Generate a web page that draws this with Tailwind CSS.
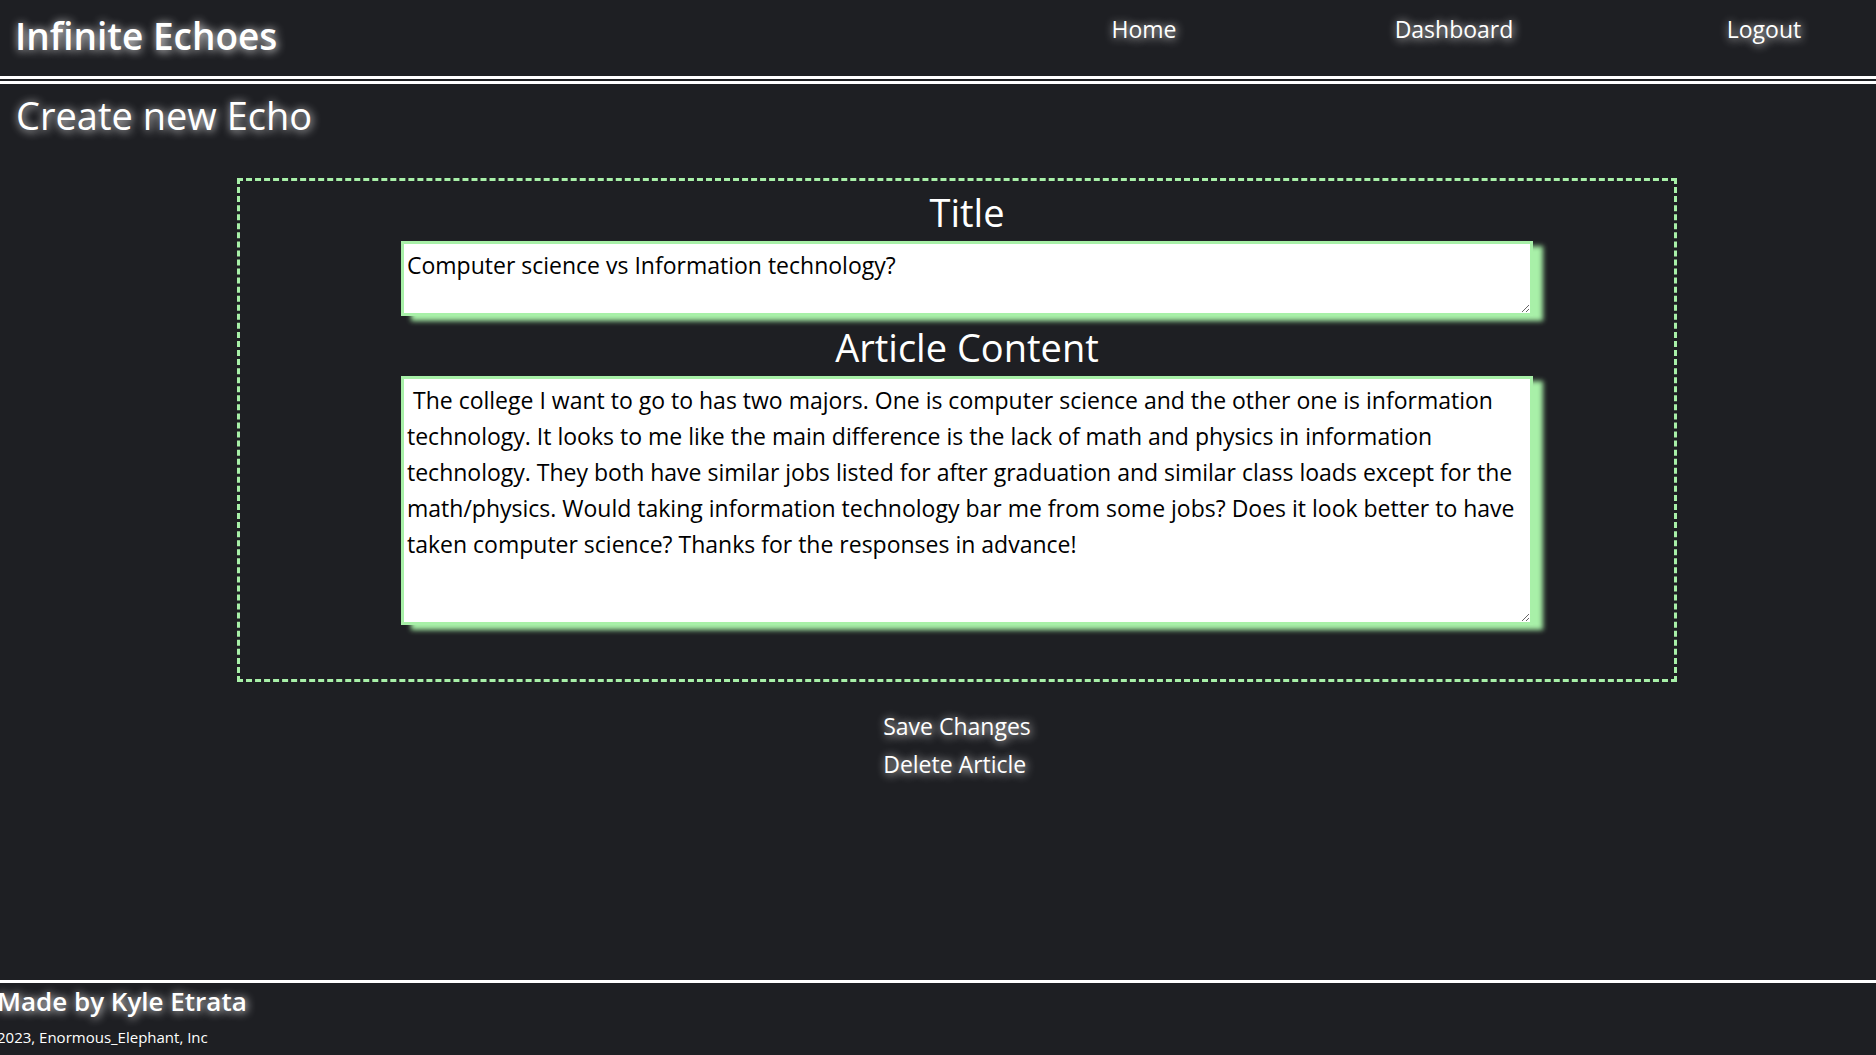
<!DOCTYPE html>
<html lang="en">
<head>
<meta charset="utf-8">
<title>Infinite Echoes</title>
<script src="https://cdn.jsdelivr.net/npm/@tailwindcss/browser@4"></script>
</head>
<body class="flex min-h-screen flex-col overflow-x-hidden bg-[#1e1f23] text-white font-['Segoe_UI','Open_Sans',sans-serif]">
  <header class="flex h-[84px] items-start justify-between border-b-8 border-double border-white pl-[15px]">
    <h1 class="mt-2 text-[37px] leading-14 font-semibold text-shadow-[1px_1px_10px_white]">Infinite Echoes</h1>
    <nav class="mt-[11px] mr-[52px] flex gap-[190px] text-[23px] leading-9 text-shadow-[1px_1px_10px_white]">
      <a href="#" class="w-[120px] text-center">Home</a>
      <a href="#" class="w-[120px] text-center">Dashboard</a>
      <a href="#" class="w-[120px] text-center">Logout</a>
    </nav>
  </header>
  <main class="flex-1">
    <h2 class="mt-[3px] pl-4 text-[38px] leading-14 text-shadow-[1px_1px_10px_white]">Create new Echo</h2>
    <form class="mt-[35px]">
      <div class="mr-[199px] ml-[237px] flex h-[504px] flex-col border-3 border-dashed border-[#a8f0a8] pt-[3px] pr-[141px] pl-[161px]">
        <label for="title" class="mb-px text-center text-[38px] leading-14">Title</label>
        <textarea id="title" class="h-[75px] resize border-3 border-[#a8f0a8] bg-white px-[3px] py-[3px] text-[23px] leading-9 text-black shadow-[10px_5px_5px_#a8f0a8]">Computer science vs Information technology?</textarea>
        <label for="content" class="mt-[3px] mb-px text-center text-[38px] leading-14">Article Content</label>
        <textarea id="content" class="h-[249px] resize border-3 border-[#a8f0a8] bg-white px-[3px] py-[3px] text-[23px] leading-9 text-black shadow-[10px_5px_5px_#a8f0a8]"> The college I want to go to has two majors. One is computer science and the other one is information technology. It looks to me like the main difference is the lack of math and physics in information technology. They both have similar jobs listed for after graduation and similar class loads except for the math/physics. Would taking information technology bar me from some jobs? Does it look better to have taken computer science? Thanks for the responses in advance!</textarea>
      </div>
      <div class="mt-[25px] mr-[199px] ml-[237px] flex justify-center">
        <div class="flex flex-col items-start text-[23px] leading-[38px]">
          <button type="submit" class="text-shadow-[1px_1px_10px_white]">Save Changes</button>
          <button type="button" class="text-shadow-[1px_1px_10px_white]">Delete Article</button>
        </div>
      </div>
    </form>
  </main>
  <footer class="h-[75px] border-t-3 border-white">
    <h3 class="-ml-[3px] text-[26px] leading-9 font-semibold text-shadow-[1px_1px_10px_white]">Made by Kyle Etrata</h3>
    <p class="-ml-[3px] text-[15px] leading-9">2023, Enormous_Elephant, Inc</p>
  </footer>
</body>
</html>
